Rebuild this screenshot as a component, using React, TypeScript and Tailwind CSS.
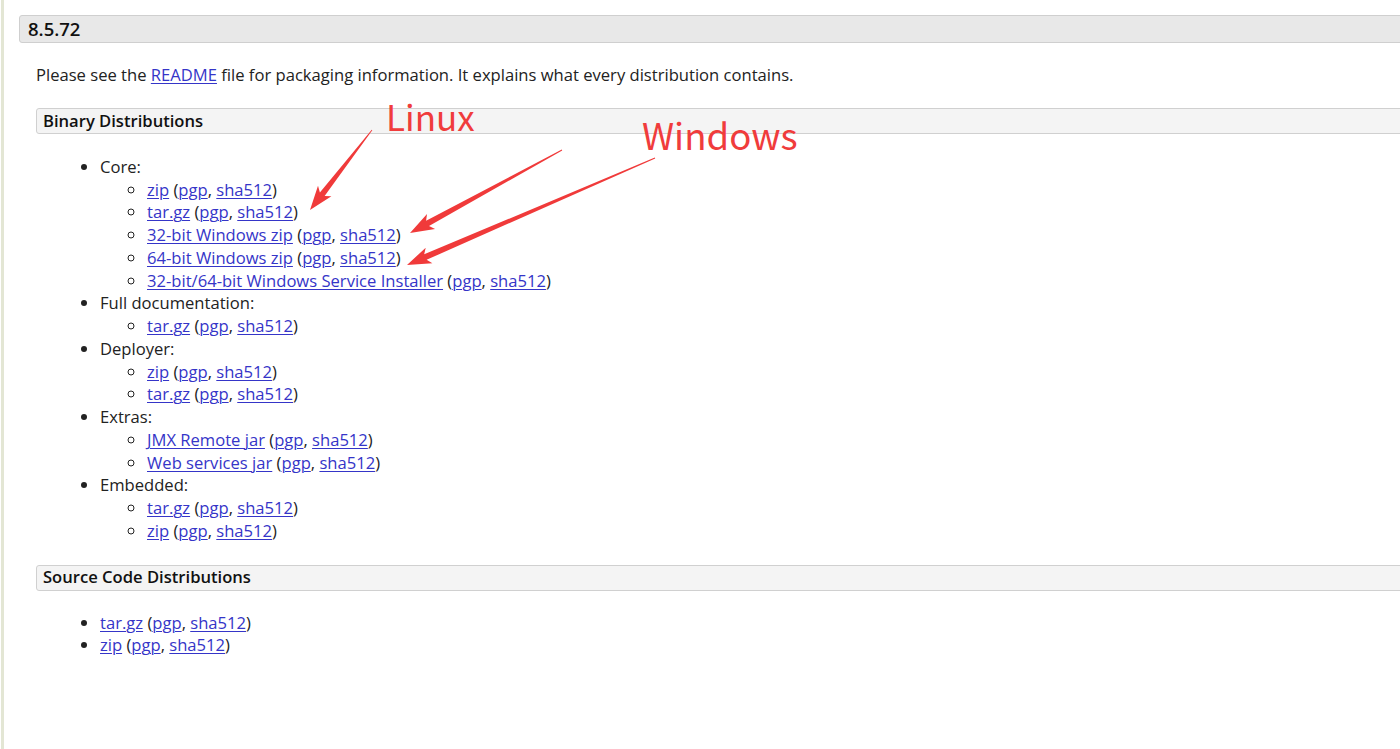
import React from "react";

const Link = ({ children }: { children: React.ReactNode }) => (
  <a href="#" className="text-[#3535c8] underline underline-offset-2 decoration-1">
    {children}
  </a>
);

const Dl = ({ name }: { name: string }) => (
  <>
    <Link>{name}</Link> (<Link>pgp</Link>, <Link>sha512</Link>)
  </>
);

const binary: { title: string; files: string[] }[] = [
  {
    title: "Core:",
    files: [
      "zip",
      "tar.gz",
      "32-bit Windows zip",
      "64-bit Windows zip",
      "32-bit/64-bit Windows Service Installer",
    ],
  },
  { title: "Full documentation:", files: ["tar.gz"] },
  { title: "Deployer:", files: ["zip", "tar.gz"] },
  { title: "Extras:", files: ["JMX Remote jar", "Web services jar"] },
  { title: "Embedded:", files: ["tar.gz", "zip"] },
];

// tapered annotation arrow, tail -> head
function arrowPoints(tx: number, ty: number, hx: number, hy: number) {
  const dx = hx - tx;
  const dy = hy - ty;
  const len = Math.hypot(dx, dy);
  const ux = dx / len;
  const uy = dy / len;
  const nx = -uy;
  const ny = ux;
  const headLen = 20;
  const headW = 8.5;
  const shaft = 3;
  const tail = 0.4;
  const bx = hx - ux * headLen;
  const by = hy - uy * headLen;
  const cx = hx - ux * (headLen + 4);
  const cy = hy - uy * (headLen + 4);
  const pts = [
    [tx + nx * tail, ty + ny * tail],
    [bx + nx * shaft, by + ny * shaft],
    [cx + nx * headW, cy + ny * headW],
    [hx, hy],
    [cx - nx * headW, cy - ny * headW],
    [bx - nx * shaft, by - ny * shaft],
    [tx - nx * tail, ty - ny * tail],
  ];
  return pts.map((p) => p.map((v) => v.toFixed(1)).join(",")).join(" ");
}

const arrows = [
  [372, 130, 310, 210],
  [562, 150, 410, 233],
  [655, 158, 407, 265],
];

export default function App() {
  return (
    <div
      className="relative w-[1400px] h-[749px] overflow-hidden bg-white text-[#222] text-[16.6px] leading-[22.75px]"
      style={{ fontFamily: '"Open Sans", "Noto Sans", sans-serif' }}
    >
      <div className="absolute left-[1px] top-0 bottom-0 w-[3px] bg-[#e3e6d4]" />
      <div className="pl-[19px] pt-[15px] w-[1460px]">
        <div className="h-[28px] flex items-center pl-[8px] pt-[1px] bg-[#e8e8e8] border border-[#cfcfcf] rounded-[3px] text-[18.5px] font-semibold text-[#111]">
          8.5.72
        </div>
        <div className="pl-[17px]">
          <p className="mt-[21px]">
            Please see the <Link>README</Link> file for packaging information. It explains what every
            distribution contains.
          </p>

          <div className="mt-[21px] h-[26px] flex items-center pl-[6px] pt-[1px] bg-[#f4f4f4] border border-[#d0d0d0] rounded-[3px] text-[16.6px] font-semibold text-[#111]">
            Binary Distributions
          </div>
          <ul className="mt-[22px] pl-[64px] list-disc">
            {binary.map((g) => (
              <li key={g.title}>
                {g.title}
                <ul className="pl-[47px] list-[circle]">
                  {g.files.map((f, i) => (
                    <li key={i}>
                      <Dl name={f} />
                    </li>
                  ))}
                </ul>
              </li>
            ))}
          </ul>

          <div className="mt-[22px] h-[26px] flex items-center pl-[6px] bg-[#f4f4f4] border border-[#d0d0d0] rounded-[3px] text-[16.6px] font-semibold text-[#111]">
            Source Code Distributions
          </div>
          <ul className="mt-[21px] pl-[64px] list-disc">
            <li>
              <Dl name="tar.gz" />
            </li>
            <li>
              <Dl name="zip" />
            </li>
          </ul>
        </div>
      </div>

      <svg className="absolute left-0 top-0" width="1400" height="749">
        {arrows.map((a, i) => (
          <polygon key={i} points={arrowPoints(a[0], a[1], a[2], a[3])} fill="#f03a3a" />
        ))}
      </svg>
      <div
        className="absolute left-[386px] top-[98px] text-[35px] leading-none text-[#f03c3c]"
        style={{ fontFamily: '"Noto Sans CJK SC", "Noto Sans", sans-serif' }}
      >
        Linux
      </div>
      <div
        className="absolute left-[642px] top-[117px] text-[36.6px] leading-none text-[#f03c3c]"
        style={{ fontFamily: '"Noto Sans CJK SC", "Noto Sans", sans-serif' }}
      >
        Windows
      </div>
    </div>
  );
}
